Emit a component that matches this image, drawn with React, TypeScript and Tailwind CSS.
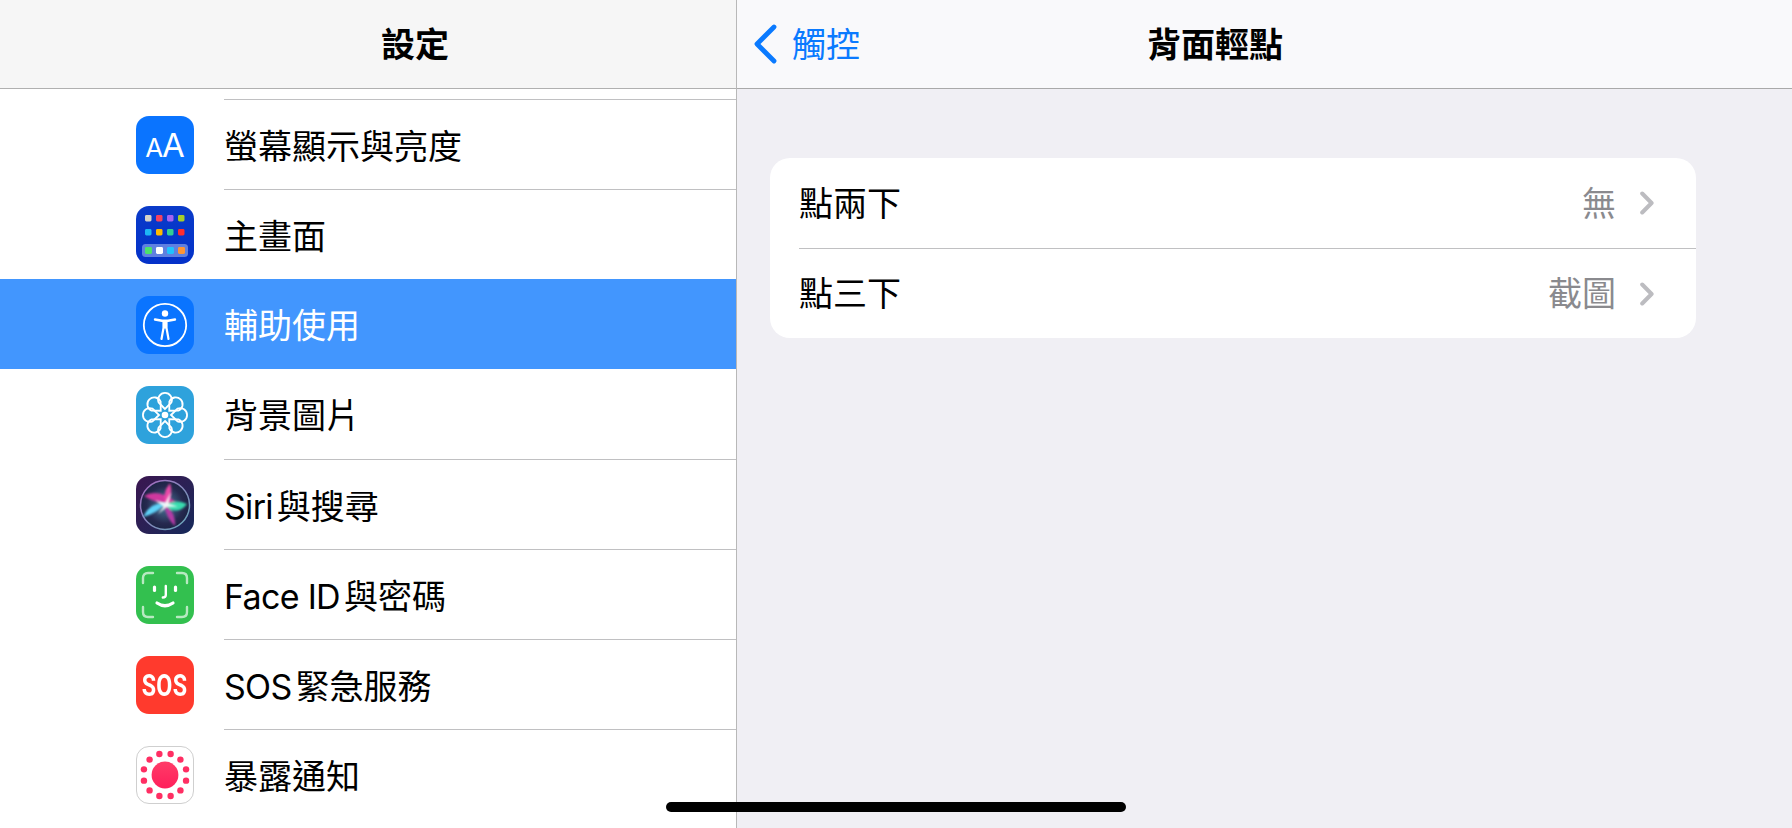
import React from "react";

const FONT = "font-['Inter','Noto_Sans_CJK_TC',sans-serif]";

function IconBox({ className, children }: { className: string; children: React.ReactNode }) {
  return (
    <div className={`flex h-[58px] w-[58px] shrink-0 items-center justify-center overflow-hidden rounded-[13px] ${className}`}>
      {children}
    </div>
  );
}

function DisplayIcon() {
  return (
    <IconBox className="bg-[#0a74ff] text-white">
      <div className="flex items-baseline font-['Inter',sans-serif] leading-none">
        <span className="text-[26px]">A</span>
        <span className="ml-[-1px] text-[33px]">A</span>
      </div>
    </IconBox>
  );
}

const dots = [
  ["#d6d3c7", "#f5425f", "#a463f2", "#a6ce2b"],
  ["#1db5f5", "#ffba00", "#32cf94", "#ff2d2d"],
];
const dock = ["#4be36a", "#ffffff", "#1fc2ff", "#ff9535"];

function HomeIcon() {
  return (
    <IconBox className="bg-gradient-to-b from-[#0a3bc9] to-[#0431c9]">
      <svg viewBox="0 0 58 58" className="h-full w-full">
        {dots.map((row, r) =>
          row.map((c, i) => <rect key={c} x={9 + i * 11} y={9 + r * 14} width="6.5" height="6.5" rx="1.4" fill={c} />)
        )}
        <rect x="6" y="38" width="46" height="13" rx="3.5" fill="#5f80e0" />
        {dock.map((c, i) => (
          <rect key={c} x={9 + i * 11} y="41" width="7" height="7" rx="1.4" fill={c} />
        ))}
      </svg>
    </IconBox>
  );
}

function AccessIcon() {
  return (
    <IconBox className="bg-[#0a74ff]">
      <svg viewBox="0 0 58 58" className="h-full w-full" fill="none" stroke="#fff">
        <circle cx="29" cy="29" r="21.2" strokeWidth="1.8" />
        <circle cx="29" cy="17.5" r="3.2" fill="#fff" stroke="none" />
        <path d="M19 23.5 L26 24.8 H32 L39 23.5" strokeWidth="2.4" strokeLinecap="round" strokeLinejoin="round" />
        <path d="M27.5 25 V32 L25.5 43 M30.5 25 V32 L32.5 43" strokeWidth="2.2" strokeLinecap="round" strokeLinejoin="round" />
        <rect x="27" y="24.5" width="4" height="8" fill="#fff" stroke="none" />
      </svg>
    </IconBox>
  );
}

function WallpaperIcon() {
  const angles = [0, 45, 90, 135, 180, 225, 270, 315];
  return (
    <IconBox className="bg-[#2ea2dc]">
      <svg viewBox="0 0 58 58" className="h-full w-full" fill="none" stroke="#fff" strokeWidth="1.8">
        {angles.map((a) => (
          <g key={a} transform={`rotate(${a} 29 29)`}>
            <path d="M29 23 L22.6 16.4 A6.9 6.9 0 1 1 35.4 16.4 Z" />
          </g>
        ))}
        <circle cx="29" cy="29" r="3.3" fill="#fff" stroke="none" />
      </svg>
    </IconBox>
  );
}

function SiriIcon() {
  return (
    <IconBox className="bg-gradient-to-br from-[#3a1550] to-[#13295a]">
      <svg viewBox="0 0 58 58" className="h-full w-full">
        <defs>
          <radialGradient id="siriBase">
            <stop offset="0%" stopColor="#4a7f9f" />
            <stop offset="75%" stopColor="#26294f" />
            <stop offset="100%" stopColor="#1c2445" />
          </radialGradient>
          <linearGradient id="siriRing" x1="0" y1="0" x2="1" y2="1">
            <stop offset="0%" stopColor="#a868c0" />
            <stop offset="100%" stopColor="#64a8b8" />
          </linearGradient>
          <filter id="siriBlur">
            <feGaussianBlur stdDeviation="1.1" />
          </filter>
        </defs>
        <circle cx="29" cy="29" r="24.5" fill="url(#siriBase)" stroke="url(#siriRing)" strokeWidth="1.5" />
        <g filter="url(#siriBlur)">
          <path d="M8 20 Q22 12 40 26 Q24 30 8 20Z" fill="#d0389f" />
          <path d="M34 7 Q38 20 30 30 Q25 18 34 7Z" fill="#e94aa8" />
          <path d="M27 30 Q40 22 51 28 Q42 40 27 30Z" fill="#39dcae" />
          <path d="M28 28 Q40 36 39 50 Q30 42 28 28Z" fill="#b23aa6" />
          <path d="M30 27 Q20 38 7 41 Q14 26 30 27Z" fill="#5ed2f8" />
        </g>
        <path d="M29 27 L35 16 L32.5 27.5 L42 30.5 L31 31 L22 38 L27.5 30.5 L19 24 Z" fill="#ffffff" opacity="0.9" filter="url(#siriBlur)" />
      </svg>
    </IconBox>
  );
}

function FaceIcon() {
  return (
    <IconBox className="bg-[#33c04f]">
      <svg viewBox="0 0 58 58" className="h-full w-full" fill="none" stroke="#fff" strokeLinecap="round" strokeLinejoin="round">
        <g strokeWidth="2.4" opacity="0.65">
          <path d="M7 17 V12 Q7 7 12 7 H17" />
          <path d="M41 7 H46 Q51 7 51 12 V17" />
          <path d="M7 41 V46 Q7 51 12 51 H17" />
          <path d="M41 51 H46 Q51 51 51 46 V41" />
        </g>
        <g strokeWidth="3.2">
          <path d="M18.5 21 V24.5" />
          <path d="M39.5 21 V24.5" />
          <path d="M29.8 20 V29 Q29.8 31.5 26.8 31.5" strokeWidth="2.4" />
          <path d="M21 37 Q29 42.5 37 37" />
        </g>
      </svg>
    </IconBox>
  );
}

function SosIcon() {
  return (
    <IconBox className="bg-[#ff3a2d]">
      <span className="inline-block scale-x-75 font-['Roboto',sans-serif] text-[31px] leading-none font-bold tracking-[0.5px] text-white">
        SOS
      </span>
    </IconBox>
  );
}

function ExposureIcon() {
  const angles = [15, 45, 75, 105, 135, 165, 195, 225, 255, 285, 315, 345];
  return (
    <IconBox className="border border-[#cfcfcf] bg-white">
      <svg viewBox="0 0 56 56" className="h-full w-full">
        <defs>
          <linearGradient id="expo" x1="0" y1="0" x2="0" y2="1">
            <stop offset="0%" stopColor="#ff3c68" />
            <stop offset="100%" stopColor="#ff1f5b" />
          </linearGradient>
        </defs>
        <circle cx="28" cy="28" r="13.4" fill="url(#expo)" />
        {angles.map((a) => (
          <circle
            key={a}
            cx={28 + 21.8 * Math.cos((a * Math.PI) / 180)}
            cy={28 + 21.8 * Math.sin((a * Math.PI) / 180)}
            r="3.2"
            fill="#ff2e63"
          />
        ))}
      </svg>
    </IconBox>
  );
}

type Row = {
  label: string;
  latin?: string;
  icon: React.ReactNode;
  selected?: boolean;
  noLine?: boolean;
};

const rows: Row[] = [
  { label: "螢幕顯示與亮度", icon: <DisplayIcon /> },
  { label: "主畫面", icon: <HomeIcon /> },
  { label: "輔助使用", icon: <AccessIcon />, selected: true },
  { label: "背景圖片", icon: <WallpaperIcon />, noLine: true },
  { label: "與搜尋", latin: "Siri", icon: <SiriIcon /> },
  { label: "與密碼", latin: "Face ID", icon: <FaceIcon /> },
  { label: "緊急服務", latin: "SOS", icon: <SosIcon /> },
  { label: "暴露通知", icon: <ExposureIcon /> },
];

function SettingsRow({ label, latin, icon, selected, noLine }: Row) {
  return (
    <div className={`flex h-[90px] items-stretch pl-[136px] ${selected ? "bg-[#4296fe]" : ""}`}>
      <div className="flex items-center pt-[2px]">{icon}</div>
      <div
        className={`ml-[30px] flex flex-1 items-center pt-[3px] text-[34px] ${
          selected ? "text-white" : "text-black"
        } ${selected || noLine ? "" : "border-t border-[#c0c0c2]"}`}
      >
        {latin && <span className="mr-[4px] tracking-[-0.7px]">{latin} </span>}
        {label}
      </div>
    </div>
  );
}

function TapRow({ label, value, line }: { label: string; value: string; line?: boolean }) {
  return (
    <div className="flex h-[90px] items-stretch pl-[29px]">
      <div className={`flex flex-1 items-center pr-[42px] ${line ? "border-t border-[#c0c0c2]" : ""}`}>
        <span className="text-[34px] text-black">{label}</span>
        <span className="ml-auto text-[34px] text-[#8a8a8e]">{value}</span>
        <svg viewBox="0 0 14 24" className="ml-[24px] h-[24px] w-[14px]" fill="none" stroke="#bcbcc0" strokeWidth="4" strokeLinecap="round" strokeLinejoin="round">
          <path d="M2.2 2.5 L11.6 12 L2.2 21.5" />
        </svg>
      </div>
    </div>
  );
}

export default function App() {
  return (
    <div className={`relative flex h-[828px] w-[1792px] overflow-hidden bg-white ${FONT}`}>
      <div className="w-[736px] shrink-0 overflow-hidden">
        <div className="flex h-[89px] items-center justify-center border-b border-[#b0b0b0] bg-[#f6f6f6] pl-[94px] text-[34px] font-bold text-black">
          設定
        </div>
        <div className="pt-[10px]">
          {rows.map((row) => (
            <SettingsRow key={row.label} {...row} />
          ))}
        </div>
      </div>
      <div className="flex-1 border-l border-[#b8b8b8] bg-[#f0eff4]">
        <div className="flex h-[89px] items-center border-b border-[#a9a9a9] bg-[#f9f9fb] pl-[16px]">
          <svg viewBox="0 0 24 40" className="h-[40px] w-[24px]" fill="none" stroke="#0a7aff" strokeWidth="4.8" strokeLinecap="round" strokeLinejoin="round">
            <path d="M21 3 L4 20 L21 37" />
          </svg>
          <span className="ml-[15px] text-[34px] text-[#0a7aff]">觸控</span>
          <span className="ml-[287px] text-[34px] font-bold text-black">背面輕點</span>
        </div>
        <div className="mt-[69px] ml-[33px] w-[926px] overflow-hidden rounded-[20px] bg-white">
          <TapRow label="點兩下" value="無" />
          <TapRow label="點三下" value="截圖" line />
        </div>
      </div>
      <div className="absolute bottom-[16px] left-[666px] h-[10px] w-[460px] rounded-full bg-black" />
    </div>
  );
}
